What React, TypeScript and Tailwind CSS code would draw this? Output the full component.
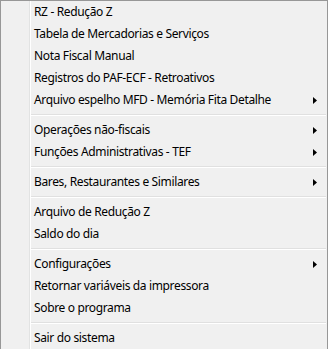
import React from 'react';

type Entry = { label: string; sub?: boolean } | 'sep';

const ITEMS: Entry[] = [
  { label: 'RZ - Redução Z' },
  { label: 'Tabela de Mercadorias e Serviços' },
  { label: 'Nota Fiscal Manual' },
  { label: 'Registros do PAF-ECF - Retroativos' },
  { label: 'Arquivo espelho MFD - Memória Fita Detalhe', sub: true },
  'sep',
  { label: 'Operações não-fiscais', sub: true },
  { label: 'Funções Administrativas - TEF', sub: true },
  'sep',
  { label: 'Bares, Restaurantes e Similares', sub: true },
  'sep',
  { label: 'Arquivo de Redução Z' },
  { label: 'Saldo do dia' },
  'sep',
  { label: 'Configurações', sub: true },
  { label: 'Retornar variáveis da impressora' },
  { label: 'Sobre o programa' },
  'sep',
  { label: 'Sair do sistema' },
];

function Arrow() {
  return (
    <svg width="4" height="7" viewBox="0 0 4 7" className="shrink-0">
      <path d="M0 0 L4 3.5 L0 7 Z" fill="#000" />
    </svg>
  );
}

export default function App() {
  return (
    <div
      className="w-[328px] h-[349px] overflow-hidden bg-[#f0f0f0] border-t border-l border-r border-[#979797] flex text-[12px] leading-none text-black"
      style={{ fontFamily: '"Noto Sans", "Open Sans", sans-serif' }}
    >
      <div className="w-[29px] shrink-0 border-r border-[#e2e3e3]" />
      <div className="flex-1 border-l border-white flex flex-col">
        {ITEMS.map((it, i) =>
          it === 'sep' ? (
            <div key={i} className="h-[8px] flex flex-col justify-center pr-[1px]">
              <div className="h-[1px] bg-[#e0e0e0]" />
              <div className="h-[1px] bg-white" />
            </div>
          ) : (
            <div key={i} className="h-[22px] shrink-0 flex items-center pl-[3px] pr-[10px]">
              <span className="flex-1 whitespace-nowrap tracking-[-0.35px]">{it.label}</span>
              {it.sub && <Arrow />}
            </div>
          )
        )}
      </div>
    </div>
  );
}
